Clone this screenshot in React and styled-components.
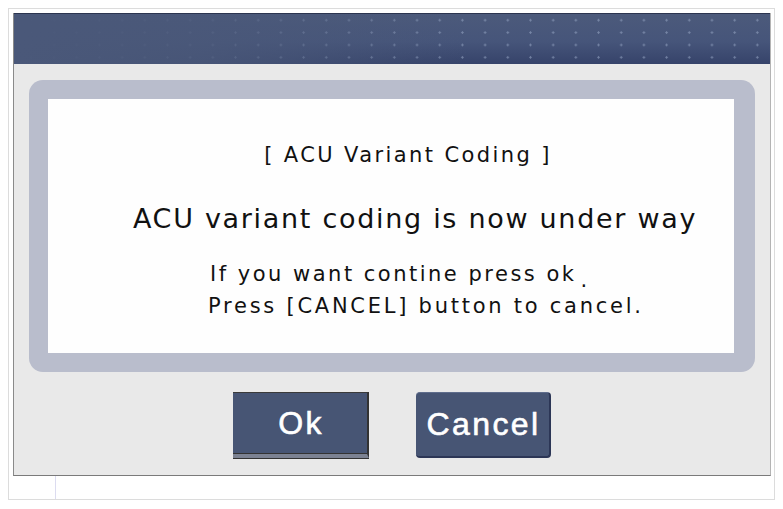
import React from 'react';
import styled, { createGlobalStyle } from 'styled-components';

const GlobalStyle = createGlobalStyle`
    html, body {
        margin: 0;
        padding: 0;
        background: #ffffff;
    }
    body {
        font-family: "DejaVu Sans", "Liberation Sans", sans-serif;
    }
`;

const Page = styled.div`
    width: 783px;
    height: 509px;
    padding: 8px 8px 9px 8px;
    box-sizing: border-box;
`;

const Sheet = styled.div`
    height: 100%;
    border: 1px solid #dcdcdc;
    box-sizing: border-box;
    padding: 4px 3px 0 4px;
    display: flex;
    flex-direction: column;
`;

const Frame = styled.div`
    height: 462px;
    background: #e9e9e9;
    border-left: 1px solid #8a8a8a;
    border-right: 1px solid #b4b4b4;
    border-bottom: 1px solid #7a7a7a;
    display: flex;
    flex-direction: column;
`;

const Header = styled.div`
    height: 50px;
    flex-shrink: 0;
    background-color: #445373;
    background-image:
        radial-gradient(circle, rgba(150, 165, 195, 0.6) 0.9px, transparent 1.4px),
        linear-gradient(to bottom, #4c5a7b 0%, #46557a 55%, #36436a 100%);
    background-size: 22.7px 12.4px, 100% 100%;
    background-position: 6px 0px, 0 0;
    border-top: 1px solid #2c3550;
    position: relative;

    &::after {
        content: '';
        position: absolute;
        inset: 0;
        background: linear-gradient(to right, #4a5879 0%, rgba(74, 88, 121, 0.85) 25%, rgba(74, 88, 121, 0) 60%);
    }
`;

const Panel = styled.div`
    margin: 16px 15px 0 15px;
    height: 292px;
    box-sizing: border-box;
    padding: 19px 21px 19px 19px;
    background: #b9bdcc;
    border-radius: 14px;
`;

const Screen = styled.div`
    height: 100%;
    background: #fefefe;
    display: flex;
    flex-direction: column;
    color: #111;
`;

const Title = styled.div`
    font-size: 21px;
    text-align: center;
    margin-top: 43px;
    padding-left: 34px;
    line-height: 26px;
    letter-spacing: 2.4px;
`;

const Headline = styled.div`
    font-size: 27px;
    text-align: center;
    margin-top: 34px;
    padding-left: 48px;
    line-height: 34px;
    letter-spacing: 1.7px;
`;

const Notes = styled.div`
    margin-top: 22px;
    display: flex;
    flex-direction: column;
`;

const Note = styled.div`
    font-size: 21px;
    line-height: 32px;
    padding-left: ${p => p.$indent}px;
    letter-spacing: ${p => p.$spacing}px;
    white-space: pre;
`;

const Dot = styled.span`
    position: relative;
    top: 6px;
    margin-left: 4px;
`;

const ButtonRow = styled.div`
    margin-top: 20px;
    display: flex;
    justify-content: center;
    gap: 47px;
`;

const Button = styled.button`
    width: ${p => p.$w}px;
    height: 66px;
    box-sizing: border-box;
    background: #475574;
    color: #ffffff;
    font-family: "Liberation Sans", sans-serif;
    font-size: 32px;
    letter-spacing: 2.4px;
    padding: 0 0 0 2px;
    cursor: pointer;
    border: none;
    border-radius: ${p => (p.$rounded ? '4px' : '0')};
    border-top: 1px solid ${p => (p.$rounded ? '#5f6d8c' : '#3a3a3a')};
    border-right: 2px solid ${p => (p.$rounded ? '#2c3656' : '#333')};
    border-bottom: ${p => (p.$rounded ? '2px solid #2c3656' : '4px solid #7c8292')};
    box-shadow: ${p => (p.$rounded ? 'none' : 'inset 0 -1px 0 #333, 0 1px 0 #333')};
    -webkit-text-stroke: 0.6px #ffffff;
`;

const Footer = styled.div`
    flex: 1;
    display: flex;
`;

const Tab = styled.div`
    width: 42px;
    border-right: 1px solid #dcdcf0;
`;

export default function App() {
    return (
        <>
            <GlobalStyle />
            <Page>
                <Sheet>
                    <Frame>
                        <Header />
                        <Panel>
                            <Screen>
                                <Title>[ ACU Variant Coding ]</Title>
                                <Headline>ACU variant coding is now under way</Headline>
                                <Notes>
                                    <Note $indent={162} $spacing={2.5}>If you want contine press ok<Dot>.</Dot></Note>
                                    <Note $indent={160} $spacing={2.75}>Press [CANCEL] button to cancel.</Note>
                                </Notes>
                            </Screen>
                        </Panel>
                        <ButtonRow>
                            <Button $w={136}>Ok</Button>
                            <Button $w={135} $rounded>Cancel</Button>
                        </ButtonRow>
                    </Frame>
                    <Footer>
                        <Tab />
                    </Footer>
                </Sheet>
            </Page>
        </>
    );
}
